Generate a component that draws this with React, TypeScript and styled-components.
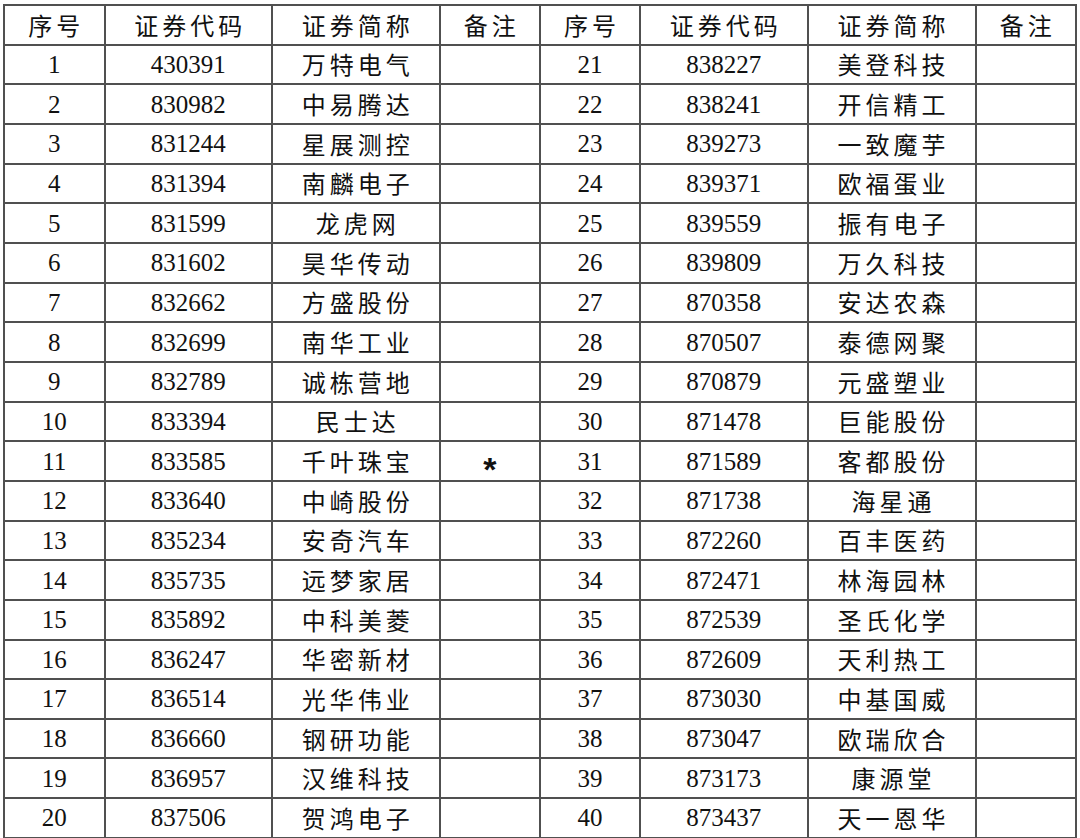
import React from "react";
import styled, { createGlobalStyle } from "styled-components";

const Global = createGlobalStyle`
  html, body { margin: 0; padding: 0; background: #ffffff; }
  body { width: 1080px; height: 838px; overflow: hidden; }
`;

const Page = styled.div`
  padding: 4px 0 0 3px;
`;

const Table = styled.table`
  border-collapse: collapse;
  table-layout: fixed;
  width: 1072px;
  color: #111;
`;

const Row = styled.tr`
  height: 39.67px;
`;

const cellBase = `
  border: 2px solid #505050;
  padding: 0;
  text-align: center;
  vertical-align: middle;
  line-height: 1;
  white-space: nowrap;
`;

const Head = styled.th`
  ${cellBase}
  font-family: "Noto Sans CJK SC", "Noto Sans", sans-serif;
  font-weight: 400;
  font-size: 24px;
  letter-spacing: 4px;
  text-indent: 4px;
`;

const Cell = styled.td<{ $cjk?: boolean }>`
  ${cellBase}
  font-family: ${(p) =>
    p.$cjk
      ? `"Noto Sans CJK SC", "Noto Sans", sans-serif`
      : `"Liberation Serif", "Times New Roman", serif`};
  font-size: ${(p) => (p.$cjk ? "24px" : "25px")};
  letter-spacing: ${(p) => (p.$cjk ? "4px" : "0")};
  text-indent: ${(p) => (p.$cjk ? "4px" : "0")};
`;

const Star = styled.span`
  font-family: "Liberation Sans", Arial, sans-serif;
  font-weight: 700;
  font-size: 34px;
  position: relative;
  top: 8px;
`;

const left: [string, string, string?][] = [
  ["430391", "万特电气"],
  ["830982", "中易腾达"],
  ["831244", "星展测控"],
  ["831394", "南麟电子"],
  ["831599", "龙虎网"],
  ["831602", "昊华传动"],
  ["832662", "方盛股份"],
  ["832699", "南华工业"],
  ["832789", "诚栋营地"],
  ["833394", "民士达"],
  ["833585", "千叶珠宝", "*"],
  ["833640", "中崎股份"],
  ["835234", "安奇汽车"],
  ["835735", "远梦家居"],
  ["835892", "中科美菱"],
  ["836247", "华密新材"],
  ["836514", "光华伟业"],
  ["836660", "钢研功能"],
  ["836957", "汉维科技"],
  ["837506", "贺鸿电子"],
];

const right: [string, string, string?][] = [
  ["838227", "美登科技"],
  ["838241", "开信精工"],
  ["839273", "一致魔芋"],
  ["839371", "欧福蛋业"],
  ["839559", "振有电子"],
  ["839809", "万久科技"],
  ["870358", "安达农森"],
  ["870507", "泰德网聚"],
  ["870879", "元盛塑业"],
  ["871478", "巨能股份"],
  ["871589", "客都股份"],
  ["871738", "海星通"],
  ["872260", "百丰医药"],
  ["872471", "林海园林"],
  ["872539", "圣氏化学"],
  ["872609", "天利热工"],
  ["873030", "中基国威"],
  ["873047", "欧瑞欣合"],
  ["873173", "康源堂"],
  ["873437", "天一恩华"],
];

const widths = [100.5, 167.5, 167.5, 100.5, 100, 167.5, 168, 100.5];
const headers = ["序号", "证券代码", "证券简称", "备注", "序号", "证券代码", "证券简称", "备注"];

export default function App() {
  return (
    <>
      <Global />
      <Page>
        <Table>
          <colgroup>
            {widths.map((w, i) => (
              <col key={i} style={{ width: `${w}px` }} />
            ))}
          </colgroup>
          <thead>
            <Row>
              {headers.map((h, i) => (
                <Head key={i}>{h}</Head>
              ))}
            </Row>
          </thead>
          <tbody>
            {left.map((l, i) => {
              const r = right[i];
              return (
                <Row key={i}>
                  <Cell>{i + 1}</Cell>
                  <Cell>{l[0]}</Cell>
                  <Cell $cjk>{l[1]}</Cell>
                  <Cell>{l[2] ? <Star>{l[2]}</Star> : null}</Cell>
                  <Cell>{i + 21}</Cell>
                  <Cell>{r[0]}</Cell>
                  <Cell $cjk>{r[1]}</Cell>
                  <Cell>{r[2] ? <Star>{r[2]}</Star> : null}</Cell>
                </Row>
              );
            })}
          </tbody>
        </Table>
      </Page>
    </>
  );
}
